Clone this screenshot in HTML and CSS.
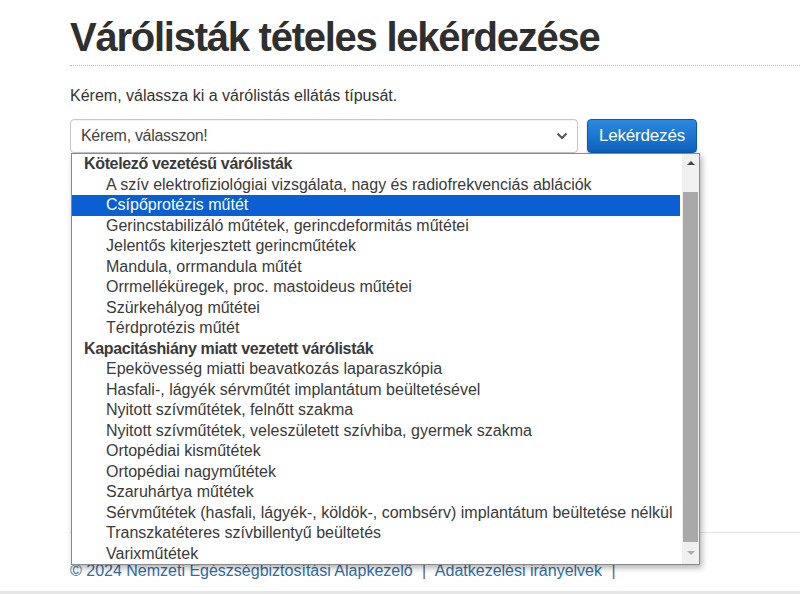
FILE: index.html
```html
<!DOCTYPE html>
<html lang="hu">
<head>
<meta charset="utf-8">
<title>Várólisták tételes lekérdezése</title>
<link rel="stylesheet" href="styles.css">
</head>
<body>
<main class="page">
  <h1 class="title">Várólisták tételes lekérdezése</h1>
  <p class="lead">Kérem, válassza ki a várólistás ellátás típusát.</p>

  <form class="query">
    <div class="picker">
      <div class="select">
        <span class="select-value">Kérem, válasszon!</span>
        <svg class="select-caret" width="12" height="8" viewBox="0 0 12 8"><path d="M1.5 1.5 L6 6 L10.5 1.5" fill="none" stroke="#555" stroke-width="2"/></svg>
      </div>

      <div class="listbox">
        <ul class="options">
          <li class="group">Kötelező vezetésű várólisták</li>
          <li>A szív elektrofiziológiai vizsgálata, nagy és radiofrekvenciás ablációk</li>
          <li class="selected">Csípőprotézis műtét</li>
          <li>Gerincstabilizáló műtétek, gerincdeformitás műtétei</li>
          <li>Jelentős kiterjesztett gerincműtétek</li>
          <li>Mandula, orrmandula műtét</li>
          <li>Orrmelléküregek, proc. mastoideus műtétei</li>
          <li>Szürkehályog műtétei</li>
          <li>Térdprotézis műtét</li>
          <li class="group">Kapacitáshiány miatt vezetett várólisták</li>
          <li>Epekövesség miatti beavatkozás laparaszkópia</li>
          <li>Hasfali-, lágyék sérvműtét implantátum beültetésével</li>
          <li>Nyitott szívműtétek, felnőtt szakma</li>
          <li>Nyitott szívműtétek, veleszületett szívhiba, gyermek szakma</li>
          <li>Ortopédiai kisműtétek</li>
          <li>Ortopédiai nagyműtétek</li>
          <li>Szaruhártya műtétek</li>
          <li>Sérvműtétek (hasfali, lágyék-, köldök-, combsérv) implantátum beültetése nélkül</li>
          <li>Transzkatéteres szívbillentyű beültetés</li>
          <li>Varixműtétek</li>
        </ul>
        <div class="scrollbar">
          <span class="arrow up"></span>
          <span class="track-gap"></span>
          <span class="thumb"></span>
          <span class="arrow down"></span>
        </div>
      </div>
    </div>
    <button type="button" class="btn">Lekérdezés</button>
  </form>

  <footer class="footer">
    <a href="#">© 2024 Nemzeti Egészségbiztosítási Alapkezelő</a>
    <span class="sep">|</span>
    <a href="#">Adatkezelési irányelvek</a>
    <span class="sep">|</span>
  </footer>
</main>
<div class="bottom-edge"></div>
</body>
</html>
```

FILE: styles.css
```css
html, body {
  margin: 0;
  padding: 0;
  background: #fff;
}

body {
  font-family: "Liberation Sans", Arial, sans-serif;
  color: #333;
  height: 594px;
  overflow: hidden;
  position: relative;
}

.page {
  padding: 12px 0 0 70px;
}

.title {
  margin: 0;
  font-size: 40px;
  font-weight: bold;
  letter-spacing: -1.25px;
  line-height: 50px;
  color: #2f2f2f;
  padding-bottom: 3px;
  border-bottom: 1px dotted #bdbdbd;
}

.lead {
  margin: 20px 0 0;
  font-size: 16px;
  letter-spacing: 0;
  line-height: 20px;
  color: #333;
}

.query {
  display: flex;
  align-items: flex-start;
  gap: 9px;
  margin-top: 13px;
}

.picker {
  position: relative;
  width: 508px;
}

.select {
  height: 32px;
  border: 1px solid #c8c8c8;
  border-radius: 4px;
  box-shadow: inset 0 1px 1px rgba(0,0,0,0.06);
  display: flex;
  align-items: center;
  justify-content: space-between;
  padding: 0 9px 0 10px;
  font-size: 16px;
  letter-spacing: -0.3px;
  color: #444;
}

.select-caret {
  display: block;
}

.btn {
  width: 110px;
  height: 34px;
  border: 1px solid #0b5aa8;
  border-radius: 4px;
  background: linear-gradient(#2a8ae0, #0d62bd);
  color: #fff;
  font-family: "Liberation Sans", Arial, sans-serif;
  font-size: 17px;
  letter-spacing: -0.2px;
  padding: 0;
  box-shadow: 0 1px 2px rgba(0,0,0,0.25);
}

/* open dropdown list of the select */
.listbox {
  position: absolute;
  left: 1px;
  top: 34px;
  width: 627px;
  height: 410px;
  border: 1px solid #8a8a8a;
  background: #fff;
  box-shadow: 2px 3px 6px rgba(0,0,0,0.3);
  display: flex;
  z-index: 5;
}

.options {
  list-style: none;
  margin: 0;
  padding: 0;
  flex: 1;
  font-size: 16px;
  letter-spacing: 0;
  color: #3a3a3a;
}

.options li {
  height: 20.5px;
  line-height: 20.5px;
  padding-left: 34px;
  white-space: nowrap;
}

.options li.group {
  padding-left: 12px;
  font-weight: bold;
  letter-spacing: -0.35px;
}

.options li.selected {
  background: #0a5fd2;
  color: #fff;
  margin-right: 2px;
}

.scrollbar {
  width: 17px;
  background: #f0f0f0;
  display: flex;
  flex-direction: column;
}

.track-gap {
  height: 21px;
}

.thumb {
  flex: 1;
  background: #a8a8a8;
  margin: 0 1px;
}

.arrow {
  height: 17px;
  display: flex;
  align-items: center;
  justify-content: center;
}

.arrow::before {
  content: "";
  border-left: 4px solid transparent;
  border-right: 4px solid transparent;
}

.arrow.up::before {
  border-bottom: 4px solid #444;
}

.arrow.down {
  height: 22px;
}

.arrow.down::before {
  border-top: 4px solid #aaa;
}

.footer {
  margin-top: 379px;
  border-top: 1px solid #e3e3e3;
  padding-top: 29px;
  font-size: 16px;
  letter-spacing: 0;
  color: #666;
}

.footer a {
  color: #2f6ea8;
  text-decoration: none;
}

.footer .sep {
  margin: 0 5px;
}

.bottom-edge {
  position: absolute;
  left: 0;
  right: 0;
  bottom: 0;
  height: 3px;
  background: #e6e6e6;
}
```
